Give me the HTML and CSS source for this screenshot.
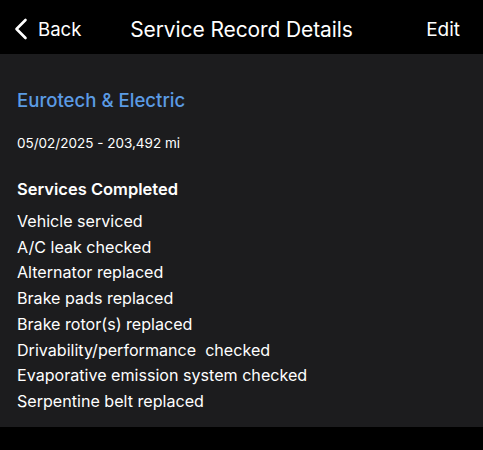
FILE: index.html
```html
<!DOCTYPE html>
<html>
<head>
<meta charset="utf-8">
<link rel="stylesheet" href="styles.css">
</head>
<body>
<header class="nav">
  <div class="back">
    <svg class="chev" width="14" height="22" viewBox="0 0 14 22"><path d="M11.5 2 L2.5 11 L11.5 20" fill="none" stroke="#fff" stroke-width="2.6" stroke-linecap="round" stroke-linejoin="round"/></svg>
    <span>Back</span>
  </div>
  <div class="title">Service Record Details</div>
  <div class="edit">Edit</div>
</header>
<main class="card">
  <h1 class="shop">Eurotech &amp; Electric</h1>
  <div class="meta">05/02/2025 - 203,492 mi</div>
  <h2 class="sect">Services Completed</h2>
  <ul class="list">
    <li>Vehicle serviced</li>
    <li>A/C leak checked</li>
    <li>Alternator replaced</li>
    <li>Brake pads replaced</li>
    <li>Brake rotor(s) replaced</li>
    <li>Drivability/performance&nbsp; checked</li>
    <li>Evaporative emission system checked</li>
    <li>Serpentine belt replaced</li>
  </ul>
</main>
</body>
</html>
```
FILE: styles.css
```css
html, body {
  margin: 0;
  padding: 0;
  background: #000;
  color: #fff;
  font-family: Inter, "Liberation Sans", sans-serif;
}
body {
  width: 483px;
  height: 450px;
  overflow: hidden;
}
.nav {
  height: 54px;
  display: flex;
  align-items: center;
  position: relative;
  padding: 0 0 0 14px;
  box-sizing: border-box;
}
.back {
  display: flex;
  align-items: center;
  gap: 10px;
  font-size: 18.6px;
  margin-top: 4px;
}
.chev { display: block; }
.title {
  position: absolute;
  left: 0;
  right: 0;
  top: 17px;
  text-align: center;
  font-size: 21px;
  pointer-events: none;
  letter-spacing: -0.1px;
}
.edit {
  margin-left: auto;
  margin-right: 23px;
  font-size: 19px;
  margin-top: 4px;
}
.card {
  background: #1c1c1e;
  height: 373px;
  padding: 35px 17px 0;
  box-sizing: border-box;
}
.shop {
  margin: 0;
  font-size: 18.6px;
  font-weight: 550;
  color: #5b9be4;
  line-height: 22px;
}
.meta {
  margin-top: 23px;
  font-size: 13.5px;
  line-height: 18px;
}
.sect {
  margin: 26px 0 0;
  font-size: 16.5px;
  font-weight: 600;
  line-height: 22px;
}
.list {
  list-style: none;
  margin: 9px 0 0;
  padding: 0;
  font-size: 16.1px;
  line-height: 25.7px;
}
```
